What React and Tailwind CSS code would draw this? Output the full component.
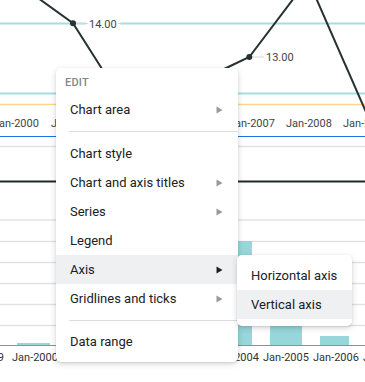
import { Fragment } from "react";

const topLabels = [
  { x: -7, t: "Jan-2000" },
  { x: 51, t: "Jan-2001" },
  { x: 229, t: "Jan-2007" },
  { x: 286, t: "Jan-2008" },
  { x: 343, t: "Jan-2009" },
];

const gridY = [220, 241.5, 262.5, 283.5, 304.5, 325.5];

const bars = [
  { x: 17, w: 33, top: 343 },
  { x: 220, w: 32, top: 241 },
  { x: 270, w: 32, top: 300 },
  { x: 320, w: 29, top: 336 },
];

const bottomLabels = [
  { x: -42, t: "Jan-1999" },
  { x: 12, t: "Jan-2000" },
  { x: 213, t: "Jan-2004" },
  { x: 263, t: "Jan-2005" },
  { x: 313, t: "Jan-2006" },
  { x: 363, t: "Jan-2007" },
];

function ChartBackdrop() {
  return (
    <svg width="365" height="382" viewBox="0 0 365 382" className="block">
      {/* top line chart */}
      <line x1="0" y1="23.5" x2="365" y2="23.5" stroke="#a7dde0" strokeWidth="2" />
      <line x1="0" y1="93.5" x2="365" y2="93.5" stroke="#a7dde0" strokeWidth="2" />
      <line x1="0" y1="104.5" x2="365" y2="104.5" stroke="#fdd58c" strokeWidth="1.5" />

      <rect x="86" y="16" width="34" height="15" fill="#fff" />
      <line x1="76" y1="23.5" x2="121" y2="23.5" stroke="#d6d6d6" strokeWidth="1" />
      <rect x="88" y="16" width="30" height="15" fill="#fff" />
      <text x="89" y="27.5" fontSize="11" fill="#444" fontFamily="Roboto, sans-serif">14.00</text>

      <line x1="252" y1="57" x2="264" y2="57" stroke="#d6d6d6" strokeWidth="1" />
      <text x="266" y="61" fontSize="11" fill="#444" fontFamily="Roboto, sans-serif">13.00</text>

      <polyline points="38,-2 73,23.3 104,72" fill="none" stroke="#263232" strokeWidth="2" />
      <polyline points="222,70 249.3,57 294,-2" fill="none" stroke="#263232" strokeWidth="2" />
      <polyline points="316,-2 366,112" fill="none" stroke="#263232" strokeWidth="2" />
      <circle cx="73" cy="23.3" r="3" fill="#263232" />
      <circle cx="249.3" cy="57" r="3" fill="#263232" />

      {topLabels.map((l) => (
        <text key={l.t} x={l.x} y="126.5" fontSize="11" fill="#444" fontFamily="Roboto, sans-serif">
          {l.t}
        </text>
      ))}

      <line x1="0" y1="136.5" x2="365" y2="136.5" stroke="#1a73e8" strokeWidth="1" />
      <line x1="0" y1="146.5" x2="365" y2="146.5" stroke="#e3e3e3" strokeWidth="1.5" />
      <line x1="0" y1="181.5" x2="365" y2="181.5" stroke="#1e2a2a" strokeWidth="2" />

      {/* bottom bar chart */}
      {gridY.map((y) => (
        <line key={y} x1="0" y1={y} x2="365" y2={y} stroke="#e2e2e2" strokeWidth="1.5" />
      ))}
      {bars.map((b) => (
        <rect key={b.x} x={b.x} y={b.top} width={b.w} height={345 - b.top} fill="#97d6da" />
      ))}
      <line x1="0" y1="345.5" x2="365" y2="345.5" stroke="#8f8f8f" strokeWidth="1" />
      {bottomLabels.map((l) => (
        <text key={l.t} x={l.x} y="361" fontSize="11" fill="#333" fontFamily="Roboto, sans-serif">
          {l.t}
        </text>
      ))}
    </svg>
  );
}

function Arrow({ dark }) {
  return (
    <svg width="7" height="8" viewBox="0 0 7 8" className="shrink-0">
      <path d="M0.5 0.5 L6.5 4 L0.5 7.5 Z" fill={dark ? "#202124" : "#9a9a9a"} />
    </svg>
  );
}

function Item({ label, sub, active, children }) {
  return (
    <div
      className={
        "relative h-[29px] flex items-center justify-between pl-[14px] pr-[15px] " +
        (active ? "bg-[#eff0f1]" : "")
      }
    >
      <span>{label}</span>
      {sub && <Arrow dark={active} />}
      {children}
    </div>
  );
}

const Divider = ({ className }) => (
  <div className={"ml-[13px] h-px bg-[#dadce0] " + className} />
);

export default function App() {
  return (
    <div className="relative w-[365px] h-[382px] overflow-hidden bg-white">
      <ChartBackdrop />

      {/* context menu */}
      <div
        className="absolute left-[56px] top-[68px] w-[182px] rounded-[5px] bg-white pb-[6px] shadow-[0_2px_6px_rgba(0,0,0,0.16),0_1px_2px_rgba(0,0,0,0.08)] text-[13px] leading-none text-[#202124]"
        style={{ fontFamily: "Roboto, 'Noto Sans', sans-serif" }}
      >
        <div className="h-[27px] pt-[9px] pl-[9px] text-[11px] leading-[12px] font-medium tracking-[0.2px] text-[#80868b]">
          EDIT
        </div>
        <Item label="Chart area" sub />
        <Divider className="mt-[7px] mb-[7px]" />
        <Item label="Chart style" />
        <Item label="Chart and axis titles" sub />
        <Item label="Series" sub />
        <Item label="Legend" />
        <Item label="Axis" sub active>
          {/* submenu */}
          <div className="absolute left-[181px] top-0 w-[115px] rounded-[5px] bg-white pt-[6px] pb-[7px] shadow-[0_2px_6px_rgba(0,0,0,0.16),0_1px_2px_rgba(0,0,0,0.08)]">
            <div className="h-[29px] flex items-center pl-[14px]">Horizontal axis</div>
            <div className="h-[29px] flex items-center pl-[14px] bg-[#eff0f1]">Vertical axis</div>
          </div>
        </Item>
        <Item label="Gridlines and ticks" sub />
        <Divider className="mt-[7px] mb-[6px]" />
        <Item label="Data range" />
      </div>
    </div>
  );
}
